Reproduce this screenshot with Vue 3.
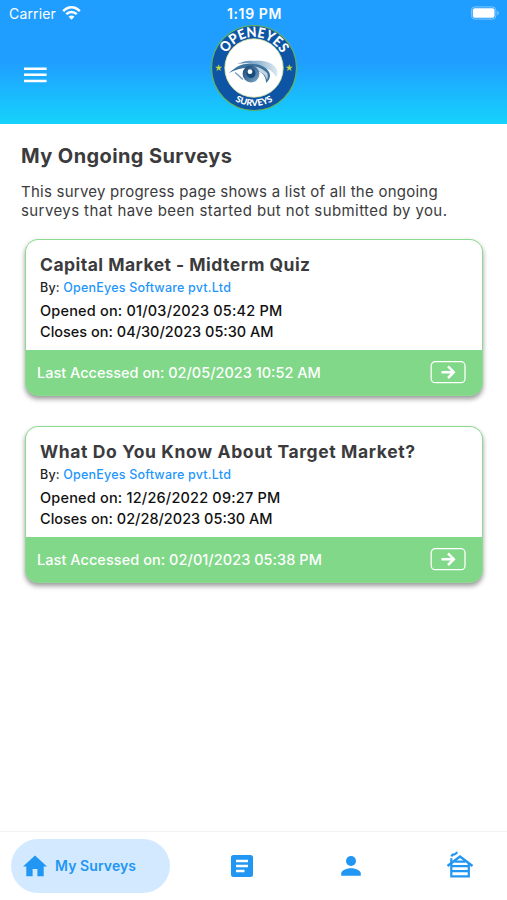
<script setup>
const surveys = [
  {
    title: 'Capital Market - Midterm Quiz',
    key: 'capital',
    opened: '01/03/2023 05:42 PM',
    closes: '04/30/2023 05:30 AM',
    accessed: '02/05/2023 10:52 AM',
  },
  {
    title: 'What Do You Know About Target Market?',
    key: 'target',
    opened: '12/26/2022 09:27 PM',
    closes: '02/28/2023 05:30 AM',
    accessed: '02/01/2023 05:38 PM',
  },
]
</script>

<template>
  <div class="screen">
    <header class="header">
      <div class="status">
        <div class="carrier">
          <span>Carrier</span>
          <svg width="19" height="14" viewBox="0 0 19 14" fill="none" stroke="#fff" stroke-width="2.5">
            <path d="M1.2 5.2C6-.1 13-.1 17.8 5.2" />
            <path d="M4.3 8.2c3-3 7.4-3 10.4 0" />
            <path d="M9.5 13.8 6.6 10.7c1.7-1.5 4.1-1.5 5.8 0z" fill="#fff" stroke="none" />
          </svg>
        </div>
        <span class="time">1:19 PM</span>
        <svg class="battery" width="30" height="14" viewBox="0 0 30 14">
          <rect x="1.4" y=".9" width="24.5" height="12.2" rx="3.5" fill="none" stroke="#7fc8ff" stroke-width="1" />
          <rect x="2.8" y="2.3" width="21.7" height="9.4" rx="2" fill="#fff" />
          <path d="M27.3 5c2 .4 2 3.6 0 4z" fill="#7fc8ff" />
        </svg>
      </div>
      <div class="bar">
        <svg class="menu" width="24" height="16" viewBox="0 0 24 16" fill="#fff">
          <path d="M0 .4h22.6v2.5H0zM0 6.6h22.6v2.5H0zM0 12.7h22.6v2.5H0z" />
        </svg>
        <svg class="logo" width="88" height="88" viewBox="-44 -44 88 88">
          <defs>
            <path id="arc-top" d="M-31 0A31 31 0 0 1 31 0" />
            <path id="arc-bottom" d="M-38 0A38 38 0 0 0 38 0" />
            <linearGradient id="brow">
              <stop offset="0" stop-color="#477ba8" />
              <stop offset=".5" stop-color="#91b5d1" />
              <stop offset="1" stop-color="#dce9f3" />
            </linearGradient>
            <linearGradient id="iris" x1="0" y1="0" x2="1" y2="1">
              <stop offset="0" stop-color="#123f6c" />
              <stop offset="1" stop-color="#7fa9cb" />
            </linearGradient>
          </defs>
          <circle r="42.5" fill="#0d55a4" stroke="#63b35b" stroke-width="1.2" />
          <circle r="29.2" fill="#fff" stroke="#d7e49b" stroke-width=".8" />
          <text class="logo-top"><textPath href="#arc-top" startOffset="50%" text-anchor="middle" textLength="67" lengthAdjust="spacingAndGlyphs">OPENEYES</textPath></text>
          <text class="logo-bottom"><textPath href="#arc-bottom" startOffset="50%" text-anchor="middle" textLength="40" lengthAdjust="spacingAndGlyphs">SURVEYS</textPath></text>
          <path d="m-35.3-3.2.8 2.1h2.2l-1.8 1.4.7 2.2-1.9-1.3-1.9 1.3.7-2.2-1.8-1.4h2.2z" fill="#c6d93c" stroke="#c6d93c" stroke-width=".4" />
          <path d="m35.3-3.2.8 2.1h2.2l-1.8 1.4.7 2.2-1.9-1.3-1.9 1.3.7-2.2-1.8-1.4h2.2z" fill="#c6d93c" stroke="#c6d93c" stroke-width=".4" />
          <path d="M-17-4C-10-7-5-8 0-7 9-8 18-6 22 0c2 3 2 7 0 9-2-4-5-7-9-8C5-3-6-6-17-4z" fill="url(#brow)" />
          <path d="M-25 5C-17-2-11-5-2-4c8 0 14 3 17 8 2 3 1 8-3 11 0-5-2-9-6-11C-1-1-12-2-25 5z" fill="#3c729c" />
          <path d="M-6-1C2-3 9 1 13 5c1 2 1 4 0 7-1-5-5-8-10-9z" fill="#c3d6e6" />
          <path d="M-19 4.5c2 1 4 4 8 7" fill="none" stroke="#6d9abd" stroke-width="1.3" />
          <circle cx="-3" cy="6" r="8.4" fill="url(#iris)" />
          <circle cx="-3" cy="5.5" r="4.5" fill="#164c7d" />
          <circle cx="-4" cy="3.7" r="2.4" fill="#fff" />
        </svg>
      </div>
    </header>

    <main class="content">
      <h1>My Ongoing Surveys</h1>
      <p class="intro">
        <span class="intro-first">This survey progress page shows a list of all the ongoing</span><br />
        <span class="intro-second">surveys that have been started but not submitted by you.</span>
      </p>
      <div class="cards">
        <article v-for="survey in surveys" :key="survey.key" class="card" :class="survey.key">
          <div class="card-body">
            <h2><span>{{ survey.title }}</span></h2>
            <div class="by">By: <a>OpenEyes Software pvt.Ltd</a></div>
            <div class="date opened">Opened on: {{ survey.opened }}</div>
            <div class="date closes">Closes on: {{ survey.closes }}</div>
          </div>
          <footer class="card-footer">
            <span class="accessed">Last Accessed on: {{ survey.accessed }}</span>
            <svg width="36" height="24" viewBox="0 0 36 24" fill="none" stroke="#fff">
              <rect x="1.2" y="1.7" width="33.8" height="21" rx="4" stroke-width="1.3" />
              <path d="M11.5 12.2h12M18 6.4l5.8 5.8-5.8 5.8" stroke-width="2.5" />
            </svg>
          </footer>
        </article>
      </div>
    </main>

    <nav class="nav">
      <div class="active">
        <svg width="24" height="22" viewBox="0 0 24 22" fill="#2196f3">
          <path d="M9.6 21.2v-7.3h4.8v7.3h6.3V11.6H24L12 .6 0 11.6h3.3v9.6z" />
        </svg>
        <span>My Surveys</span>
      </div>
      <div class="tab">
        <svg width="24" height="24" viewBox="0 0 24 24" fill="#2196f3">
          <path fill-rule="evenodd" d="M3.5 1h17A2.5 2.5 0 0 1 23 3.5v17a2.5 2.5 0 0 1-2.5 2.5h-17A2.5 2.5 0 0 1 1 20.5v-17A2.5 2.5 0 0 1 3.5 1zM6 5.8v2.4h12V5.8zm0 5v2.4h12v-2.4zm0 5v2.4h8.5v-2.4z" />
        </svg>
      </div>
      <div class="tab">
        <svg width="22" height="22" viewBox="0 0 22 22" fill="#2196f3">
          <circle cx="11" cy="6" r="5" />
          <path d="M1.2 20.7v-2.3c0-3.3 6.5-5.1 9.8-5.1s9.8 1.8 9.8 5.1v2.3z" />
        </svg>
      </div>
      <div class="tab">
        <svg width="28" height="28" viewBox="0 0 28 28" fill="none" stroke="#2196f3" stroke-width="2.2">
          <path d="m1.5 14 12.500-9.500 12.500 9.500" stroke-width="2.4" />
          <path d="M5.300 11.500v12.800h17.500V11.500M5.300 14.200h17.500M5.300 19.200h17.500M8.500 9.600h11M5.300 11V6.300M5.500 4.500c.3-2 1.700-2.200 3-2.200 1.400 0 1.400-1.400 3-1.600" />
        </svg>
      </div>
    </nav>
  </div>
</template>

<style>
body {
  margin: 0;
  background: #fff;
}
</style>

<style scoped>
.screen {
  width: 507px;
  height: 900px;
  display: flex;
  flex-direction: column;
  background: #fff;
  font-family: Inter, "Noto Sans", sans-serif;
  overflow: hidden;
}
h1,
h2,
p {
  margin: 0;
}
svg {
  display: block;
  flex: none;
  overflow: visible;
}
span,
.date,
.by {
  white-space: nowrap;
}
.header {
  height: 124px;
  flex: none;
  background: linear-gradient(#209eff 0%, #209eff 50%, #15d3fb 100%);
}
.status {
  box-sizing: border-box;
  height: 24px;
  padding: 4px 7px 1px 9px;
  display: grid;
  grid-template-columns: 1fr auto 1fr;
  align-items: center;
  color: #fff;
  font-size: 14px;
  line-height: 18px;
}
.status svg {
  margin-top: -2px;
}
.carrier {
  display: flex;
  align-items: center;
  gap: 6px;
  letter-spacing: 0.15px;
}
.carrier span,
.time {
  margin-top: 1px;
}
.time {
  font-weight: 600;
  letter-spacing: 0.6px;
}
.battery {
  justify-self: end;
}
.bar {
  height: 88px;
  display: flex;
  align-items: center;
}
.menu {
  margin: 13px 0 0 24px;
}
.logo {
  margin-left: 162px;
}
.logo-top {
  font: 900 14px Lato, sans-serif;
  fill: #fff;
}
.logo-bottom {
  font: 900 9px Lato, sans-serif;
  fill: #fff;
}
.content {
  flex: 1;
  padding: 20px 24px 0 21px;
  color: #3b3b3d;
}
h1 {
  font-size: 20px;
  line-height: 24px;
  font-weight: 700;
  letter-spacing: 0.4px;
}
.intro {
  margin-top: 15px;
  font-size: 15px;
  line-height: 18.5px;
}
.intro-first {
  letter-spacing: 0.24px;
}
.intro-second {
  letter-spacing: 0.41px;
}
.cards {
  margin: 19px 0 0 4px;
  display: flex;
  flex-direction: column;
  gap: 30px;
}
.card {
  box-sizing: border-box;
  width: 458px;
  height: 157px;
  display: flex;
  flex-direction: column;
  border: 1.5px solid #8bdc91;
  border-radius: 13px;
  background: #80d888;
  box-shadow: 0 3px 5px rgba(0, 0, 0, 0.4);
  overflow: hidden;
}
.card-body {
  height: 110px;
  box-sizing: border-box;
  padding: 13px 14px 0;
  background: #fff;
}
h2 {
  font-size: 17.5px;
  line-height: 24px;
  font-weight: 700;
}
.capital h2 {
  letter-spacing: 0.47px;
}
.target h2 {
  letter-spacing: 0.62px;
}
.by {
  padding-top: 1px;
  color: #222;
  font-size: 12.5px;
  line-height: 20px;
  font-weight: 500;
  letter-spacing: 0.2px;
}
.by a {
  color: #1f96fb;
}
.date {
  color: #111;
  font-size: 14.5px;
  line-height: 21px;
  font-weight: 500;
}
.opened {
  margin-top: 2px;
  letter-spacing: 0.19px;
}
.closes {
  letter-spacing: 0;
}
.card-footer {
  flex: 1;
  padding: 0 16px 1px 11px;
  display: flex;
  align-items: center;
  justify-content: space-between;
  color: #fff;
  font-size: 14.5px;
  font-weight: 500;
}
.target .accessed {
  letter-spacing: 0.05px;
}
.nav {
  box-sizing: border-box;
  height: 69px;
  flex: none;
  padding-left: 11px;
  display: grid;
  grid-template-columns: 176px 109px 109px 109px;
  align-items: center;
  border-top: 1px solid #f2f2f2;
}
.active {
  box-sizing: border-box;
  width: 159px;
  height: 54px;
  border-radius: 27px;
  padding-left: 12px;
  display: flex;
  align-items: center;
  gap: 8px;
  background: #d3e9ff;
  color: #2196f3;
  font-size: 14px;
  font-weight: 600;
  letter-spacing: 0.1px;
}
.active span {
  margin-top: -1px;
}
.tab {
  display: flex;
  justify-content: center;
}
</style>
